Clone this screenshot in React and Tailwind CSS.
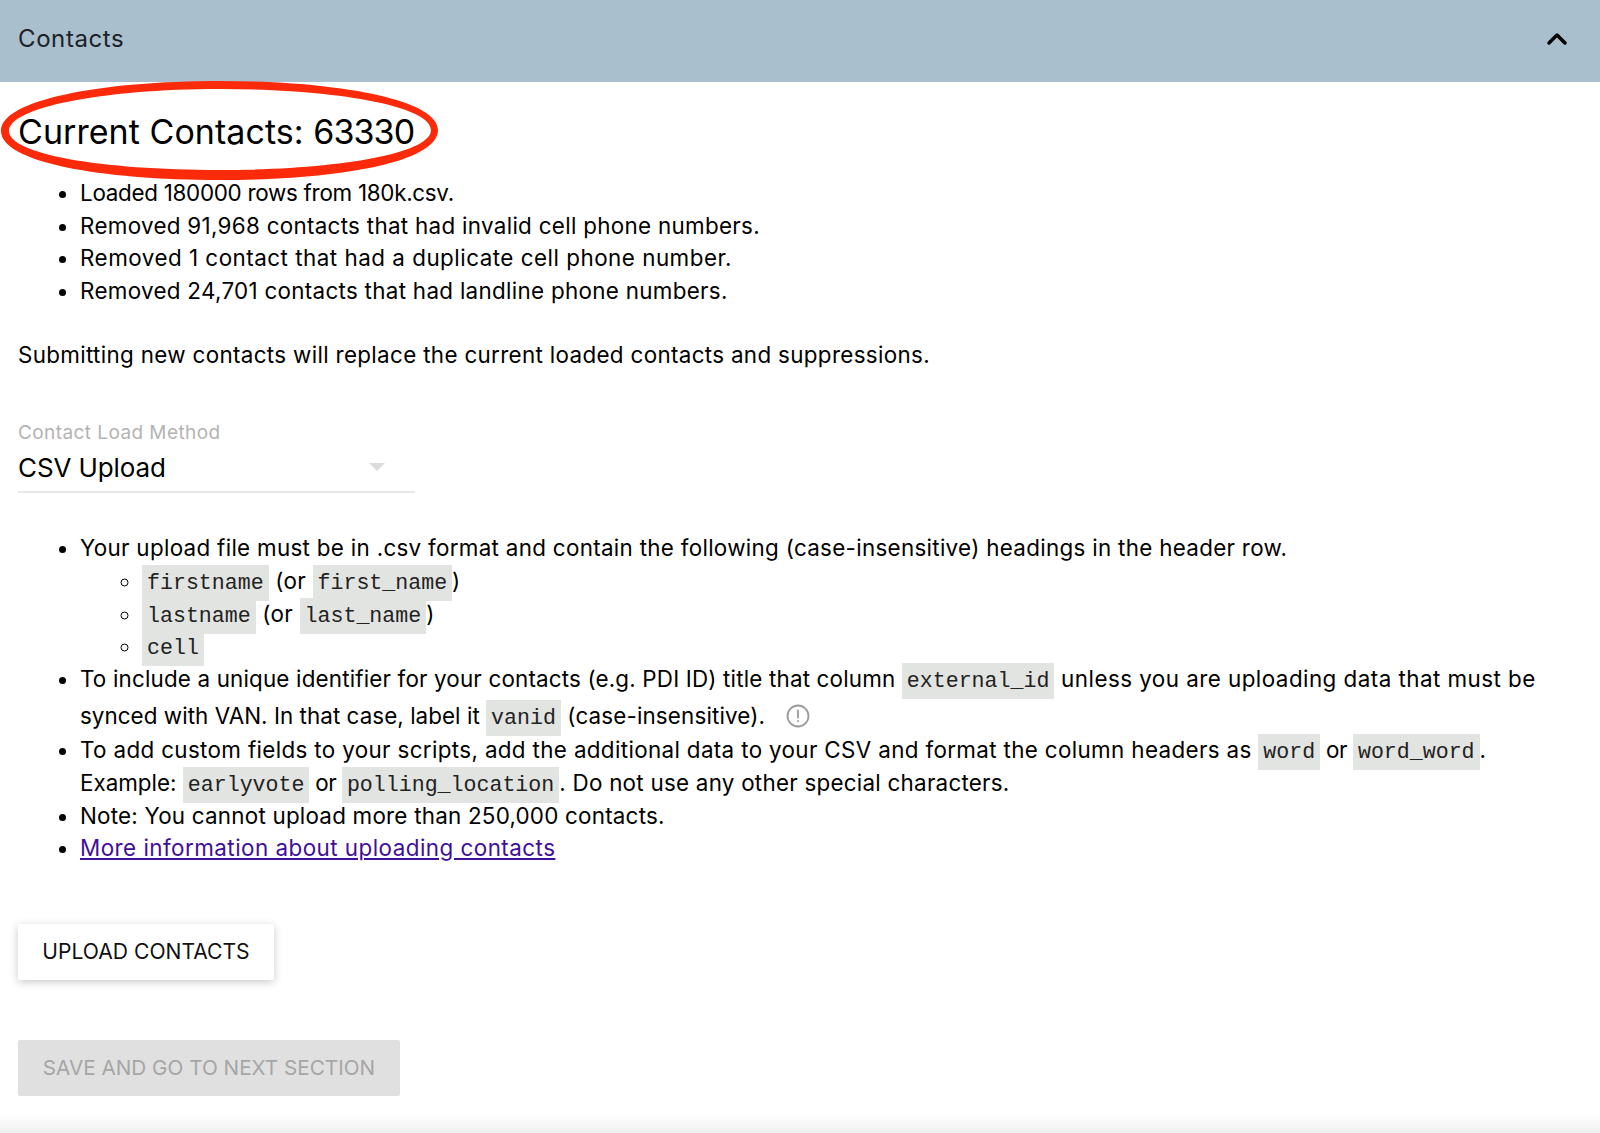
import React from 'react';
import { ChevronUp } from 'lucide-react';

const Code = ({ children }) => (
  <code className="bg-[#e2e4e1] px-[5px] py-[6px] text-[21.6px] leading-none tracking-normal text-[#222] font-['Liberation_Mono',monospace]">{children}</code>
);

const App = () => {
  return (
    <div className="relative h-[1133px] overflow-hidden bg-white text-black font-['Inter',sans-serif] text-[22.4px] leading-[32.67px] tracking-[0.3px]">
      {/* Header */}
      <div className="flex h-[82px] items-center justify-between bg-[#a9bfce] pb-[4px] pl-[18px] pr-[27px]">
        <span className="text-[24px] tracking-[0.6px] text-[#1c2226]">Contacts</span>
        <ChevronUp className="w-[32px] h-[32px] text-black" strokeWidth={2.6} />
      </div>

      <div className="px-[18px]">
        <h2 className="pt-[26px] text-[34px] leading-[48px] tracking-[0.05px]">
          Current Contacts: <span className="tracking-[-0.9px]">63330</span>
        </h2>

        <ul className="mt-[21px] list-disc pl-[62px]">
          <li className="tracking-[-0.28px]">Loaded 180000 rows from 180k.csv.</li>
          <li>Removed 91,968 contacts that had invalid cell phone numbers.</li>
          <li className="tracking-[0.5px]">Removed 1 contact that had a duplicate cell phone number.</li>
          <li>Removed 24,701 contacts that had landline phone numbers.</li>
        </ul>

        <p className="mt-[31px] tracking-[0.33px]">Submitting new contacts will replace the current loaded contacts and suppressions.</p>

        {/* Select */}
        <div className="mt-[50px] w-[397px] border-b-2 border-[#e8e8e8] pb-[5px]">
          <div className="text-[19px] leading-[24px] tracking-[0.42px] text-[#b3b3b3]">Contact Load Method</div>
          <div className="relative mt-[5px] text-[26px] leading-[36px] tracking-[-0.1px]">
            CSV Upload
            <span className="absolute right-[30px] top-[13px] h-0 w-0 border-x-[8px] border-t-[8px] border-x-transparent border-t-[#dcdcdc]"></span>
          </div>
        </div>

        <ul className="mt-[39px] list-disc pl-[62px]">
          <li>
            Your upload file must be in .csv format and contain the following (case-insensitive) headings in the header row.
            <ul className="list-[circle] pl-[62px]">
              <li><Code>firstname</Code> (or <Code>first_name</Code>)</li>
              <li><Code>lastname</Code> (or <Code>last_name</Code>)</li>
              <li><Code>cell</Code></li>
            </ul>
          </li>
          <li className="whitespace-nowrap">
            <span className="tracking-[0.17px]">To include a unique identifier for your contacts (e.g. PDI ID) title that column </span>
            <Code>external_id</Code>
            <span className="tracking-[0.46px]"> unless you are uploading data that must be</span>
            <div className="mb-[2px] mt-[4px] flex items-center">
              <span className="whitespace-pre">
                <span className="tracking-[0.05px]">synced with VAN. In that case, label it </span>
                <Code>vanid</Code>
                <span className="tracking-[0.15px]"> (case-insensitive).</span>
              </span>
              <svg className="ml-[21px] w-[24px] h-[24px] text-[#9a9a9a]" viewBox="0 0 24 24" fill="none" stroke="currentColor" strokeWidth="1.8" strokeLinecap="round">
                <circle cx="12" cy="12" r="10.5" />
                <path d="M12 6.5v7" />
                <path d="M12 17v.2" />
              </svg>
            </div>
          </li>
          <li className="whitespace-nowrap">
            <span className="tracking-[0.35px]">To add custom fields to your scripts, add the additional data to your CSV and format the column headers as </span>
            <Code>word</Code>
            <span className="tracking-[-0.4px]"> or </span>
            <Code>word_word</Code>.
            <br />
            <span className="tracking-[0px]">Example: </span>
            <Code>earlyvote</Code>
            <span className="tracking-[-0.5px]"> or </span>
            <Code>polling_location</Code>
            <span className="tracking-[0.25px]">. Do not use any other special characters.</span>
          </li>
          <li className="tracking-[0.22px]">Note: You cannot upload more than 250,000 contacts.</li>
          <li className="tracking-[0.47px]"><a href="#" className="text-[#3f0f99] underline">More information about uploading contacts</a></li>
        </ul>

        {/* Buttons */}
        <button className="mt-[59px] block h-[56px] w-[256px] rounded-[2px] bg-white text-center text-[21.1px] tracking-normal text-[#111] shadow-[0_2px_8px_rgba(0,0,0,0.22)]">
          UPLOAD CONTACTS
        </button>
        <button disabled className="mt-[60px] block h-[56px] w-[382px] rounded-[2px] bg-[#e0e0e0] text-center text-[20.7px] tracking-normal text-[#a6a6a6]">
          SAVE AND GO TO NEXT SECTION
        </button>
      </div>

      {/* Fade at the bottom edge */}
      <div className="absolute inset-x-0 bottom-0 h-[20px] bg-gradient-to-b from-white to-[#f0f0f0]"></div>

      {/* Red hand-drawn ellipse over the heading */}
      <svg className="absolute left-0 top-[78px]" width="444" height="106" viewBox="0 0 444 106">
        <path
          fillRule="evenodd"
          fill="#fb2a0a"
          d="M1 53 C1 22 100 3 220 3 C340 3 438 22 438 52 C438 84 340 102 220 102 C100 102 1 84 1 53 Z M9 53 C9 30 100 11 220 11 C335 11 431 28 431 52 C431 76 335 92 220 92 C100 92 9 76 9 53 Z"
        />
      </svg>
    </div>
  );
};

export default App;
